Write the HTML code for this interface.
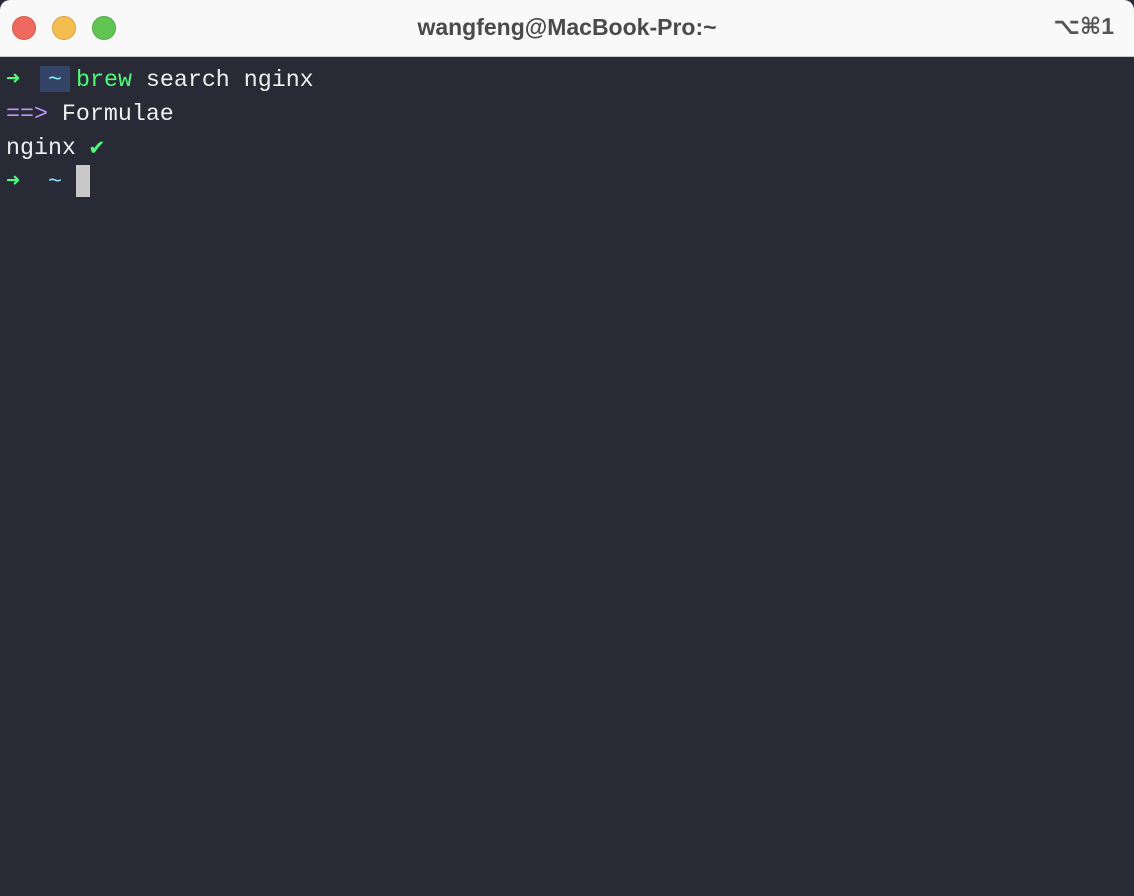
<!DOCTYPE html>
<html><head><style>
body{margin:0;width:1134px;height:896px;overflow:hidden;background:#282a36;font-family:"Liberation Mono",monospace;}
.tb{position:absolute;left:0;top:0;width:1134px;height:56px;background:#f9f9f9;border-bottom:1px solid #c8c8c8;border-radius:10px 10px 0 0;}
.d{position:absolute;top:16px;width:22px;height:22px;border-radius:50%;}
.title{position:absolute;left:0;width:1134px;top:14px;text-align:center;font:bold 23px "Liberation Sans",sans-serif;color:#4a4a4a;}
.sc{position:absolute;right:20px;top:13px;font:bold 23px "Liberation Sans","DejaVu Sans",sans-serif;color:#555;}
.l{position:absolute;height:34px;line-height:34px;font-size:23.3px;color:#f0f0f0;white-space:pre;}
.g{color:#50fa7b}.c{color:#8be9fd}.p{color:#bd93f9}
.hl{position:absolute;left:40px;top:66px;width:30px;height:26px;background:#334466}
.cur{position:absolute;left:76px;top:165px;width:14px;height:32px;background:#c8c8c8;}
</style></head><body>
<div class="tb">
<div class="d" style="left:12px;background:#ee6a5f;border:1px solid #d55a50"></div>
<div class="d" style="left:52px;background:#f5bd4f;border:1px solid #d9a441"></div>
<div class="d" style="left:92px;background:#61c554;border:1px solid #50ab45"></div>
<div class="title">wangfeng@MacBook-Pro:~</div>
<div class="sc">⌥⌘1</div>
</div>
<div class="hl"></div>
<div class="l g" style="left:6px;top:63px">➜</div>
<div class="l c" style="left:48px;top:63px">~</div>
<div class="l" style="left:76px;top:63px"><span class="g">brew</span> search nginx</div>
<div class="l" style="left:6px;top:97px"><span class="p">==&gt;</span> Formulae</div>
<div class="l" style="left:6px;top:131px">nginx <span class="g">✔</span></div>
<div class="l g" style="left:6px;top:165px">➜</div>
<div class="l c" style="left:48px;top:165px">~</div>
<div class="cur"></div>
</body></html>
